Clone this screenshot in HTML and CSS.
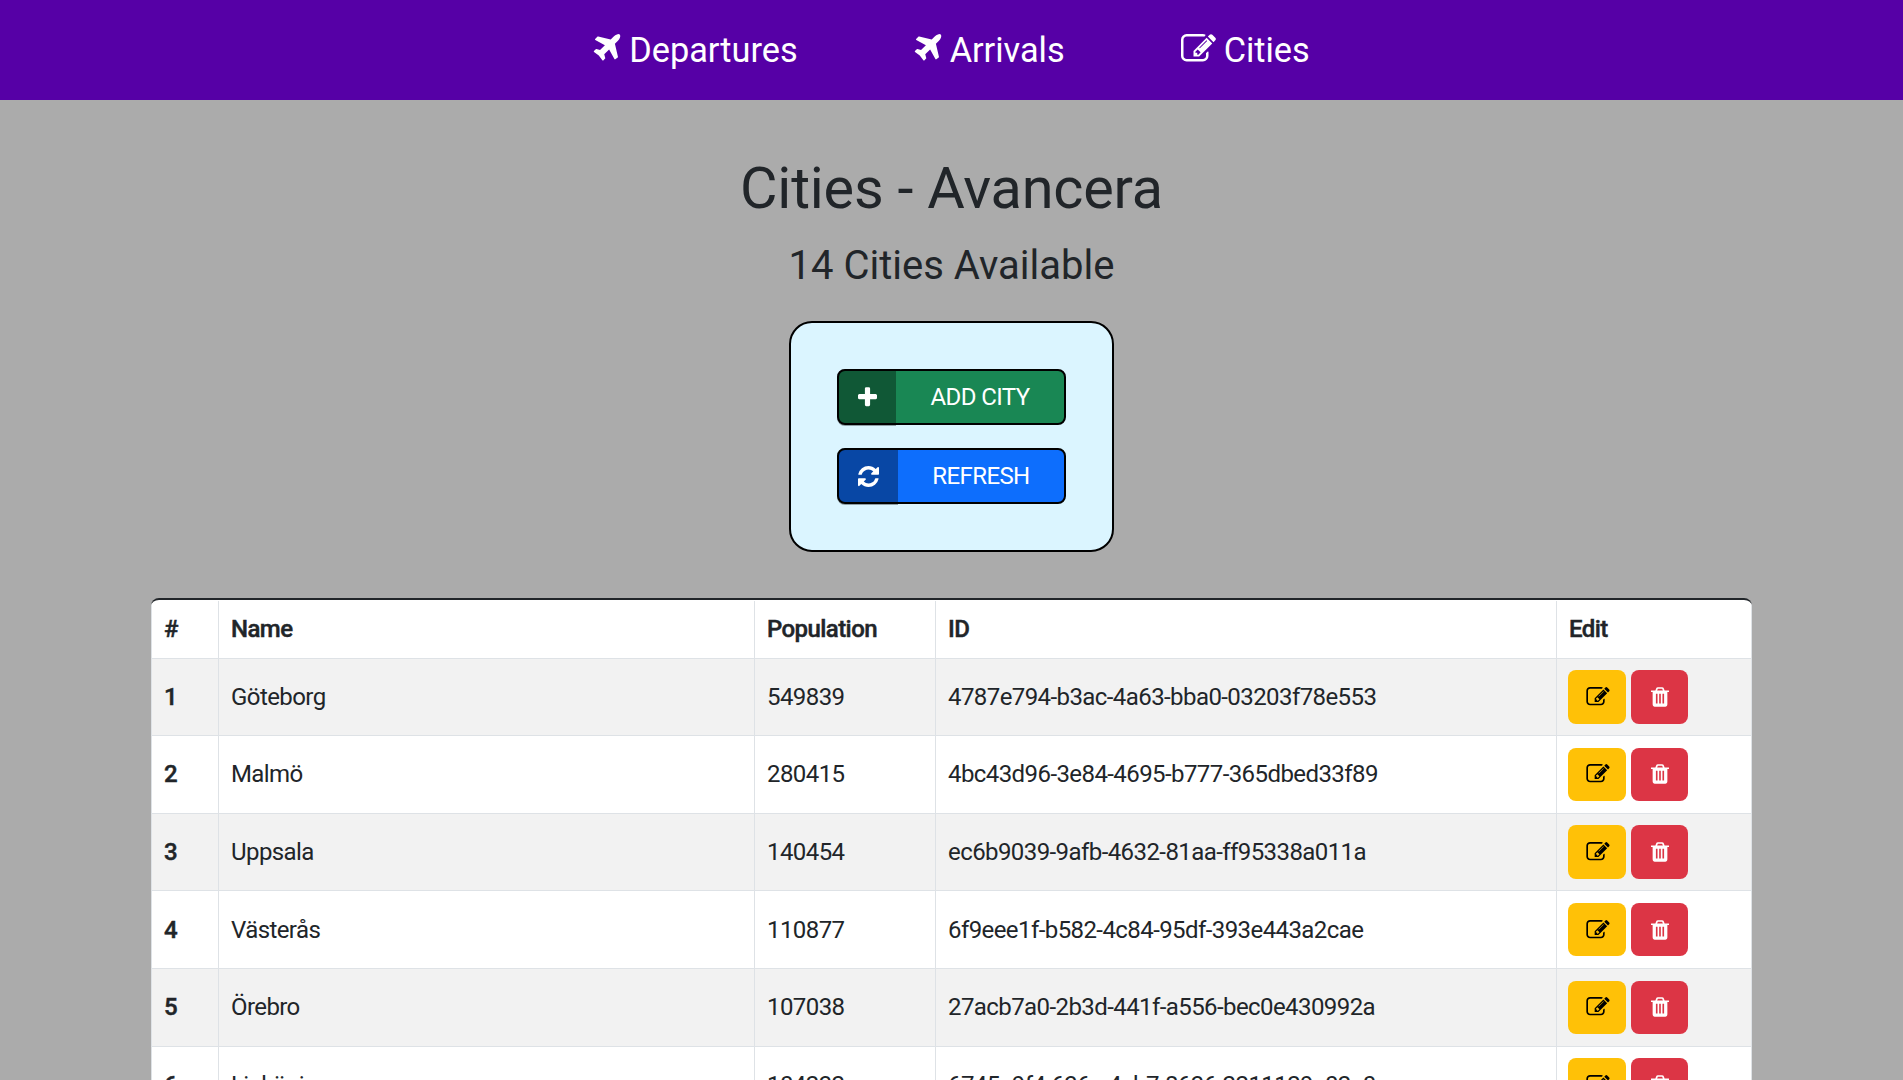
FILE: index.html
```html
<!DOCTYPE html>
<html lang="en">
<head>
<meta charset="utf-8">
<title>Cities - Avancera</title>
<link rel="stylesheet" href="styles.css">
</head>
<body>
<svg class="sprite" width="0" height="0" aria-hidden="true">
<symbol id="plane" viewBox="188 128 1408 1536"><path d="M1568 160q44 52 12 148t-108 172l-161 161 160 696q5 19-12 33l-128 96q-7 6-19 6-4 0-7-1-15-3-21-16l-279-508-259 259 53 194q5 17-8 31l-96 96q-9 9-23 9h-2q-15-2-24-13l-189-252-252-189q-11-7-13-23-1-13 9-25l96-97q9-9 23-9 6 0 8 1l194 53 259-259-508-279q-14-8-17-24-2-16 9-27l128-128q14-13 30-8l665 159 160-160q76-76 172-108t148 12z"/></symbol>
<symbol id="edit" viewBox="0 128 1792 1536"><path d="M888 1184l116-116-152-152-116 116v56h96v96h56zm440-720q-16-16-33 1l-350 350q-17 17-1 33t33-1l350-350q17-17 1-33zm80 594v190q0 119-84.5 203.5t-203.5 84.5h-832q-119 0-203.5-84.5t-84.5-203.5v-832q0-119 84.5-203.5t203.5-84.5h832q63 0 117 25 15 7 18 23 3 17-9 29l-49 49q-14 14-32 8-23-6-45-6h-832q-66 0-113 47t-47 113v832q0 66 47 113t113 47h832q66 0 113-47t47-113v-126q0-13 9-22l64-64q15-15 35-7t20 29zm-96-738l288 288-672 672h-288v-288zm444 132l-92 92-288-288 92-92q28-28 68-28t68 28l152 152q28 28 28 68t-28 68z"/></symbol>
<symbol id="trash" viewBox="192 128 1408 1536"><path d="M704 1376v-704q0-14-9-23t-23-9h-64q-14 0-23 9t-9 23v704q0 14 9 23t23 9h64q14 0 23-9t9-23zm256 0v-704q0-14-9-23t-23-9h-64q-14 0-23 9t-9 23v704q0 14 9 23t23 9h64q14 0 23-9t9-23zm256 0v-704q0-14-9-23t-23-9h-64q-14 0-23 9t-9 23v704q0 14 9 23t23 9h64q14 0 23-9t9-23zm-544-992h448l-48-117q-7-9-17-11h-317q-10 2-17 11zm928 32v64q0 14-9 23t-23 9h-96v948q0 83-47 143.5t-113 60.5h-832q-66 0-113-58.5t-47-141.5v-952h-96q-14 0-23-9t-9-23v-64q0-14 9-23t23-9h309l70-167q15-37 54-63t79-26h320q40 0 79 26t54 63l70 167h309q14 0 23 9t9 23z"/></symbol>
<symbol id="refresh" viewBox="128 128 1536 1536"><path d="M1639 1056q0 5-1 7-64 268-268 434.5t-478 166.5q-146 0-282.5-55t-243.5-157l-129 129q-19 19-45 19t-45-19-19-45v-448q0-26 19-45t45-19h448q26 0 45 19t19 45-19 45l-137 137q71 66 161 102t187 36q134 0 250-65t186-179q11-17 53-117 8-23 30-23h192q13 0 22.5 9.5t9.5 22.5zm25-800v448q0 26-19 45t-45 19h-448q-26 0-45-19t-19-45 19-45l138-138q-148-137-349-137-134 0-250 65t-186 179q-11 17-53 117-8 23-30 23h-199q-13 0-22.5-9.5t-9.5-22.5v-7q65-268 270-434.5t480-166.5q146 0 284 55.5t245 156.5l130-129q19-19 45-19t45 19 19 45z"/></symbol>
<symbol id="plus" viewBox="192 128 1408 1536"><path d="M1600 736v192q0 40-28 68t-68 28h-416v416q0 40-28 68t-68 28h-192q-40 0-68-28t-28-68v-416h-416q-40 0-68-28t-28-68v-192q0-40 28-68t68-28h416v-416q0-40 28-68t68-28h192q40 0 68 28t28 68v416h416q40 0 68 28t28 68z"/></symbol>
</svg>
<nav class="nav">
<a class="nav-link"><svg class="icon-plane"><use href="#plane"/></svg><span>Departures</span></a>
<a class="nav-link"><svg class="icon-plane"><use href="#plane"/></svg><span>Arrivals</span></a>
<a class="nav-link"><svg class="icon-cities"><use href="#edit"/></svg><span>Cities</span></a>
</nav>
<main class="page">
<h1 class="title"><span>Cities - Avancera</span></h1>
<h2 class="subtitle"><span>14 Cities Available</span></h2>
<section class="actions">
<button class="action add"><span class="action-icon"><svg class="icon-plus"><use href="#plus"/></svg></span><span class="action-text">ADD CITY</span></button>
<button class="action refresh"><span class="action-icon"><svg class="icon-refresh"><use href="#refresh"/></svg></span><span class="action-text">REFRESH</span></button>
</section>
<div class="table">
<div class="row head"><div>#</div><div>Name</div><div>Population</div><div>ID</div><div>Edit</div></div>
<div class="row"><div class="num">1</div><div>Göteborg</div><div>549839</div><div>4787e794-b3ac-4a63-bba0-03203f78e553</div><div class="tools"><button class="btn edit"><svg class="icon-edit"><use href="#edit"/></svg></button><button class="btn delete"><svg class="icon-trash"><use href="#trash"/></svg></button></div></div>
<div class="row"><div class="num">2</div><div>Malmö</div><div>280415</div><div>4bc43d96-3e84-4695-b777-365dbed33f89</div><div class="tools"><button class="btn edit"><svg class="icon-edit"><use href="#edit"/></svg></button><button class="btn delete"><svg class="icon-trash"><use href="#trash"/></svg></button></div></div>
<div class="row"><div class="num">3</div><div>Uppsala</div><div>140454</div><div>ec6b9039-9afb-4632-81aa-ff95338a011a</div><div class="tools"><button class="btn edit"><svg class="icon-edit"><use href="#edit"/></svg></button><button class="btn delete"><svg class="icon-trash"><use href="#trash"/></svg></button></div></div>
<div class="row"><div class="num">4</div><div>Västerås</div><div>110877</div><div>6f9eee1f-b582-4c84-95df-393e443a2cae</div><div class="tools"><button class="btn edit"><svg class="icon-edit"><use href="#edit"/></svg></button><button class="btn delete"><svg class="icon-trash"><use href="#trash"/></svg></button></div></div>
<div class="row"><div class="num">5</div><div>Örebro</div><div>107038</div><div>27acb7a0-2b3d-441f-a556-bec0e430992a</div><div class="tools"><button class="btn edit"><svg class="icon-edit"><use href="#edit"/></svg></button><button class="btn delete"><svg class="icon-trash"><use href="#trash"/></svg></button></div></div>
<div class="row"><div class="num">6</div><div>Linköping</div><div>104232</div><div>6745e9f4-636c-4cb7-8636-2211129c02c0</div><div class="tools"><button class="btn edit"><svg class="icon-edit"><use href="#edit"/></svg></button><button class="btn delete"><svg class="icon-trash"><use href="#trash"/></svg></button></div></div>
</div>
</main>
</body>
</html>
```
FILE: styles.css
```css
* { box-sizing: border-box; }
html { height: 100%; overflow: hidden; }
body { margin: 0; height: 100%; overflow: hidden; background: #ababab; color: #212529; font: 24px/36px Roboto, sans-serif; }
.sprite { display: block; width: 0; height: 0; }
svg { fill: currentColor; flex: none; }
.nav { height: 100px; background: #5600a6; color: #fff; display: flex; justify-content: center; gap: 116px; font-size: 34.3px; }
.nav-link { display: flex; align-items: center; gap: 8px; height: 98px; }
.nav-link span { padding-top: 1px; }
.icon-plane { width: 28px; height: 29px; margin-top: -2px; }
.icon-cities { width: 35px; height: 30px; margin-top: -1px; }
.page { display: flex; flex-direction: column; align-items: center; }
.title { margin: 54px 0 0; font-size: 57.6px; line-height: 70px; font-weight: 400; letter-spacing: -.2px; }
.subtitle { margin: 18px 0 0; font-size: 40px; line-height: 48px; font-weight: 400; }
.actions { width: 325px; height: 231px; margin-top: 31px; padding: 46px; border: 2px solid #000; border-radius: 23px; background: #dbf5ff; display: flex; flex-direction: column; gap: 23px; }
.action { display: flex; width: 229px; height: 56px; padding: 0; border: 2px solid #000; border-radius: 8px; color: #fff; font: 24px/36px Roboto, sans-serif; letter-spacing: -.6px; }
.add { background: #198754; }
.refresh { background: #0d6efd; }
/* The darker icon panel overlaps the button's border by one pixel at the bottom */
.action-icon { width: 59px; height: 57px; margin: -2px 0 -3px -2px; padding-left: 2px; border-radius: 8px 0 0 8px; display: flex; align-items: center; justify-content: center; background: rgba(0,0,0,.35); }
.refresh .action-icon { width: 61px; }
.icon-plus { width: 19px; height: 21px; }
.icon-refresh { width: 21px; height: 21px; }
.action-text { flex: 1; height: 52px; display: flex; align-items: center; justify-content: center; }
.table { width: 1601px; margin-top: 46px; border-top: 2px solid #212529; border-radius: 8px 8px 0 0; overflow: hidden; background: #fff; }
.row { display: grid; grid-template-columns: 68px 536px 181px 621px 195px; height: 77.6px; border-bottom: 1px solid #dee2e6; letter-spacing: -.58px; }
.row > div { padding: 0 12px; display: flex; align-items: center; border-right: 1px solid #dee2e6; }
.row > div:first-child { border-left: 1px solid #dee2e6; }
.row:nth-child(even) { background: #f2f2f2; }
.row.head { height: 58.6px; padding-top: 1px; }
.head, .num { font-weight: 500; -webkit-text-stroke: .45px currentColor; }
.row > .tools { gap: 5px; padding-left: 11px; }
.btn { width: 57px; height: 53.4px; border: 0; border-radius: 8px; padding: 0; display: flex; align-items: center; justify-content: center; }
.edit { width: 58px; padding-left: 2px; background: #ffc107; color: #000; }
.delete { background: #dc3545; color: #fff; }
.icon-edit { width: 24px; height: 20px; }
.icon-trash { width: 18px; height: 20px; }
```
